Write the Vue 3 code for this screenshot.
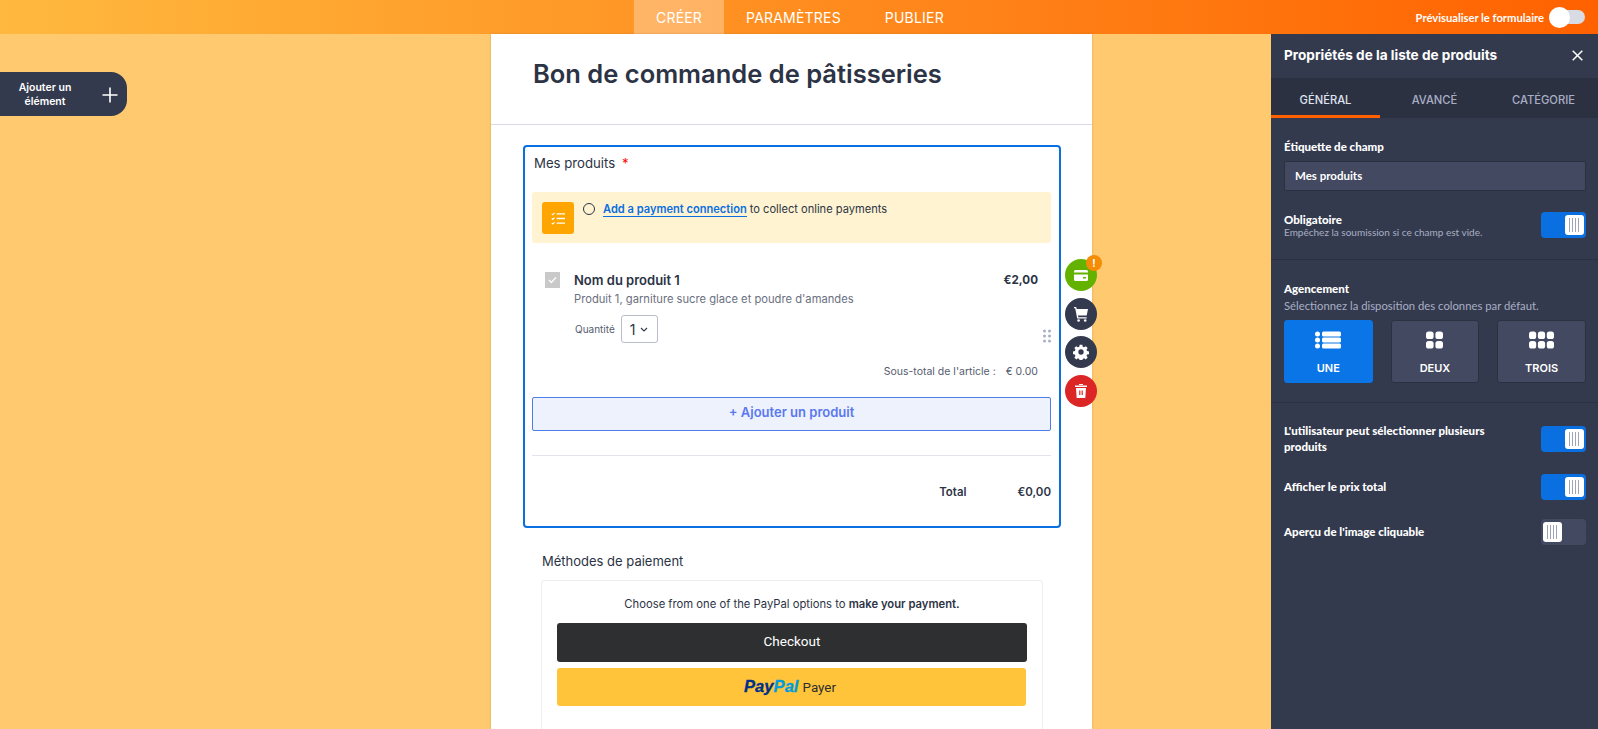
<script setup>
const toggles = [
  { label: "L'utilisateur peut sélectionner plusieurs produits", on: true },
  { label: 'Afficher le prix total', on: true },
  { label: "Aperçu de l'image cliquable", on: false }
]
const layouts = ['UNE', 'DEUX', 'TROIS']
</script>

<template>
  <div class="page">
    <header class="topbar">
      <nav class="nav">
        <a class="nav__item nav__item--active">CRÉER</a>
        <a class="nav__item">PARAMÈTRES</a>
        <a class="nav__item">PUBLIER</a>
      </nav>
      <div class="preview">
        <span>Prévisualiser le formulaire</span>
        <span class="preview__switch"><i></i></span>
      </div>
    </header>

    <div class="main">
      <div class="canvas">
        <button class="add-element">
          <span>Ajouter un élément</span>
          <svg width="16" height="16" viewBox="0 0 16 16"><path d="M8 .5v15M.5 8h15" stroke="#fff" stroke-width="1.6" fill="none"/></svg>
        </button>

        <div class="form">
          <div class="form__head">
            <h1>Bon de commande de pâtisseries</h1>
          </div>

          <div class="form__body">
            <div class="field">
              <div class="field__label">Mes produits <b>*</b></div>

              <div class="notice">
                <span class="notice__icon">
                  <svg width="15" height="13" viewBox="0 0 16 14" fill="none" stroke="#fff">
                    <path d="M6 2h9M6 7h9M6 12h9" stroke-width="1.5"/>
                    <path d="M.8 2l1 1 2-2M.8 7l1 1 2-2M.8 12l1 1 2-2" stroke-width="1.2"/>
                  </svg>
                </span>
                <span class="notice__radio"></span>
                <span class="notice__text"><a>Add a payment connection</a> to collect online payments</span>
              </div>

              <div class="product">
                <span class="product__check">
                  <svg width="9" height="8" viewBox="0 0 9 8"><path d="M1 4l2.4 2.4L8 1.4" stroke="#fff" stroke-width="1.4" fill="none"/></svg>
                </span>
                <div class="product__info">
                  <div class="product__row">
                    <span class="product__name">Nom du produit 1</span>
                    <span class="product__price">€2,00</span>
                  </div>
                  <div class="product__desc">Produit 1, garniture sucre glace et poudre d'amandes</div>
                  <div class="product__qty">
                    <span>Quantité</span>
                    <span class="qty-select">1
                      <svg width="8" height="5" viewBox="0 0 8 5"><path d="M1 1l3 3 3-3" stroke="#343a4e" stroke-width="1.1" fill="none"/></svg>
                    </span>
                  </div>
                  <div class="product__subtotal"><span>Sous-total de l'article :</span><span>€ 0.00</span></div>
                </div>
                <svg class="product__grip" width="8" height="14" viewBox="0 0 8 14" fill="#a9afc2">
                  <circle cx="1.5" cy="2" r="1.5"/><circle cx="6.5" cy="2" r="1.5"/>
                  <circle cx="1.5" cy="7" r="1.5"/><circle cx="6.5" cy="7" r="1.5"/>
                  <circle cx="1.5" cy="12" r="1.5"/><circle cx="6.5" cy="12" r="1.5"/>
                </svg>
              </div>

              <div class="add-product">+ Ajouter un produit</div>
              <div class="field__rule"></div>
              <div class="total"><span>Total</span><b>€0,00</b></div>

              <div class="actions">
                <span class="action action--green">
                  <svg width="14" height="11" viewBox="0 0 14 11"><rect width="14" height="11" rx="1.5" fill="#fff"/><rect y="2.5" width="14" height="2" fill="#64b200"/><rect x="9" y="7" width="3" height="1.5" fill="#64b200"/></svg>
                  <i class="action__badge">!</i>
                </span>
                <span class="action">
                  <svg width="16" height="16" viewBox="0 0 16 16" fill="#fff"><path d="M1 1h2.2l.5 2H15l-1.3 6.6H5l.3 1.6h8.4v1.3H4.2L2.2 2.3H1z"/><circle cx="5.6" cy="14.5" r="1.3"/><circle cx="12.2" cy="14.5" r="1.3"/></svg>
                </span>
                <span class="action">
                  <svg width="16" height="16" viewBox="0 0 24 24" fill="#fff"><path fill-rule="evenodd" d="M10 1h4l.6 3 2 .9 2.6-1.7 2.8 2.8-1.7 2.6.9 2 3 .6v4l-3 .6-.9 2 1.7 2.6-2.8 2.8-2.6-1.7-2 .9-.6 3h-4l-.6-3-2-.9-2.6 1.7-2.8-2.8 1.7-2.6-.9-2-3-.6v-4l3-.6.9-2L2 6l2.8-2.8 2.6 1.7 2-.9zM12 8a4 4 0 1 0 0 8 4 4 0 0 0 0-8z"/></svg>
                </span>
                <span class="action action--red">
                  <svg width="12" height="14" viewBox="0 0 12 14"><path d="M0 1.5h12V3H0zM4 0h4v1H4z" fill="#fff"/><path fill="#fff" fill-rule="evenodd" d="M1 4h10l-.7 10H1.7zM4.2 6.5v4.5h1.2V6.5zM6.6 6.5v4.5h1.2V6.5z"/></svg>
                </span>
              </div>
            </div>

            <div class="payment">
              <div class="payment__label">Méthodes de paiement</div>
              <div class="payment__box">
                <p>Choose from one of the PayPal options to <b>make your payment.</b></p>
                <div class="btn-checkout">Checkout</div>
                <div class="btn-paypal">
                  <span class="paypal-logo"><em>Pay</em><em>Pal</em></span>
                  <span>Payer</span>
                </div>
              </div>
            </div>
          </div>
        </div>
      </div>

      <aside class="panel">
        <div class="panel__head">
          <span>Propriétés de la liste de produits</span>
          <svg width="11" height="11" viewBox="0 0 11 11"><path d="M.7.7l9.6 9.6M10.3.7L.7 10.3" stroke="#fff" stroke-width="1.5"/></svg>
        </div>
        <div class="tabs">
          <span class="tab tab--active">GÉNÉRAL</span>
          <span class="tab">AVANCÉ</span>
          <span class="tab">CATÉGORIE</span>
        </div>

        <section class="section">
          <label class="prop-label">Étiquette de champ</label>
          <div class="input">Mes produits</div>
          <div class="prop-row prop-row--first">
            <div>
              <div class="prop-label prop-label--flat prop-label--nudge">Obligatoire</div>
              <div class="hint">Empêchez la soumission si ce champ est vide.</div>
            </div>
            <span class="switch switch--on"><i></i></span>
          </div>
        </section>

        <section class="section section--layout">
          <div class="prop-label prop-label--flat">Agencement</div>
          <div class="hint hint--big">Sélectionnez la disposition des colonnes par défaut.</div>
          <div class="layouts">
            <div v-for="(name, i) in layouts" :key="name" class="layout" :class="{ 'layout--active': i === 0 }">
              <svg v-if="i === 0" width="26" height="18" viewBox="0 0 26 18" fill="#fff">
                <circle cx="2.5" cy="3" r="2.5"/><circle cx="2.5" cy="9" r="2.5"/><circle cx="2.5" cy="15" r="2.5"/>
                <rect x="7" y="0.5" width="19" height="5" rx="1.5"/><rect x="7" y="6.5" width="19" height="5" rx="1.5"/><rect x="7" y="12.5" width="19" height="5" rx="1.5"/>
              </svg>
              <svg v-else-if="i === 1" width="17" height="17" viewBox="0 0 17 17" fill="#fff">
                <rect width="7.6" height="7.6" rx="2.6"/><rect x="9.4" width="7.6" height="7.6" rx="2.6"/>
                <rect y="9.4" width="7.6" height="7.6" rx="2.6"/><rect x="9.4" y="9.4" width="7.6" height="7.6" rx="2.6"/>
              </svg>
              <svg v-else width="25" height="17" viewBox="0 0 25 17" fill="#fff">
                <rect width="7.2" height="7.6" rx="2.6"/><rect x="8.9" width="7.2" height="7.6" rx="2.6"/><rect x="17.8" width="7.2" height="7.6" rx="2.6"/>
                <rect y="9.4" width="7.2" height="7.6" rx="2.6"/><rect x="8.9" y="9.4" width="7.2" height="7.6" rx="2.6"/><rect x="17.8" y="9.4" width="7.2" height="7.6" rx="2.6"/>
              </svg>
              <span>{{ name }}</span>
            </div>
          </div>
        </section>

        <section class="section section--last">
          <div v-for="t in toggles" :key="t.label" class="prop-row">
            <div class="prop-label prop-label--flat prop-label--wrap">{{ t.label }}</div>
            <span class="switch" :class="{ 'switch--on': t.on }"><i></i></span>
          </div>
        </section>
      </aside>
    </div>
  </div>
</template>

<style>
html, body { margin: 0; padding: 0; }
</style>

<style scoped>
.page {
  height: 729px;
  width: 1598px;
  overflow: hidden;
  display: flex;
  flex-direction: column;
  font-family: Inter, "Noto Sans", sans-serif;
  color: #2c3345;
}

.topbar {
  height: 34px;
  flex: none;
  position: relative;
  display: flex;
  justify-content: flex-end;
  align-items: center;
  background: linear-gradient(90deg, #ffb93e 0%, #ff6100 100%);
}
.nav {
  position: absolute;
  left: 634px;
  top: 0;
  display: flex;
  height: 34px;
}
.nav__item {
  display: flex;
  align-items: center;
  padding: 0 22px;
  color: #fff;
  font-size: 14px;
  letter-spacing: 0.2px;
}
.nav__item--active { background: rgba(255, 255, 255, 0.3); }
.preview {
  display: flex;
  align-items: center;
  gap: 5px;
  padding-right: 13px;
  color: #fff;
  font-family: Lato, sans-serif;
  font-weight: 700;
  font-size: 11.2px;
}
.preview__switch {
  position: relative;
  width: 36px;
  height: 14px;
  border-radius: 7px;
  background: #d8dae4;
}
.preview__switch i {
  position: absolute;
  left: 0;
  top: -3px;
  width: 21px;
  height: 21px;
  border-radius: 50%;
  background: #fff;
}

.main {
  flex: 1;
  display: flex;
  min-height: 0;
}
.canvas {
  flex: 1;
  position: relative;
  background: #ffc970;
  padding-left: 491px;
}
.add-element {
  position: absolute;
  left: 0;
  top: 38px;
  width: 127px;
  height: 44px;
  display: flex;
  align-items: center;
  gap: 25px;
  padding: 0 10px 0 13px;
  border: none;
  border-radius: 0 16px 16px 0;
  background: #343a4e;
  color: #fff;
  font-family: Inter, sans-serif;
  font-weight: 600;
  font-size: 10.5px;
  line-height: 14px;
}
.add-element span { width: 64px; flex: none; text-align: center; padding-top: 2px; }
.add-element svg { flex: none; margin-top: 1px; }

.form {
  width: 601px;
  height: 100%;
  background: #fff;
  box-shadow: 0 0 2px rgba(120, 90, 40, 0.35);
}
.form__head {
  height: 91px;
  box-sizing: border-box;
  border-bottom: 1px solid #d8dae9;
  padding: 24px 42px 0;
}
.form__head h1 {
  margin: 0;
  font-size: 25.5px;
  line-height: 32px;
  font-weight: 600;
  color: #2c3345;
}
.form__body { padding: 20px 31px 0 32px; }

.field {
  position: relative;
  height: 383px;
  box-sizing: border-box;
  border: 2px solid #0a6fe0;
  border-radius: 4px;
  padding: 6px 8px 0 7px;
}
.field__label {
  font-size: 13.2px;
  line-height: 20px;
  padding-left: 2px;
}
.field__label b { color: #f00; font-weight: 400; margin-left: 3px; }

.notice {
  margin-top: 19px;
  height: 51px;
  display: flex;
  align-items: flex-start;
  border-radius: 3px;
  background: #fff3d1;
  font-size: 11.1px;
  line-height: 16px;
}
.notice__icon {
  margin: 10px 0 0 10px;
  width: 32px;
  height: 32px;
  display: flex;
  align-items: center;
  justify-content: center;
  border-radius: 3px;
  background: #ffa500;
}
.notice__radio {
  margin: 11px 0 0 9px;
  width: 10px;
  height: 10px;
  border: 1.5px solid #2c3345;
  border-radius: 50%;
}
.notice__text { margin: 9px 0 0 8px; color: #2c3345; }
.notice__text a {
  color: #0a6fe0;
  font-weight: 600;
  border-bottom: 1px solid #0a6fe0;
}

.product {
  position: relative;
  display: flex;
  margin-top: 28px;
  padding: 0 13px 0 13px;
}
.product__check {
  margin-top: 1px;
  width: 15px;
  height: 16px;
  display: flex;
  align-items: center;
  justify-content: center;
  background: #c9c9c9;
}
.product__info { flex: 1; margin-left: 14px; }
.product__row {
  display: flex;
  justify-content: space-between;
  line-height: 18px;
  font-weight: 600;
}
.product__name { font-size: 13px; }
.product__price { font-size: 11.6px; font-weight: 700; }
.product__desc {
  margin-top: 2px;
  font-size: 11.2px;
  line-height: 16px;
  color: #6b7080;
}
.product__qty {
  display: flex;
  align-items: center;
  margin: 8px 0 0 1px;
  font-size: 10px;
  color: #565c6e;
}
.qty-select {
  margin-left: 6px;
  width: 27px;
  height: 26px;
  padding-left: 8px;
  display: flex;
  align-items: center;
  gap: 5px;
  border: 1px solid #b8bdc9;
  border-radius: 3px;
  color: #2c3345;
  font-size: 14px;
}
.product__subtotal {
  display: flex;
  justify-content: flex-end;
  gap: 10px;
  margin-top: 22px;
  font-size: 10.5px;
  line-height: 14px;
  color: #565c6e;
}
.product__grip {
  position: absolute;
  right: 0;
  top: 58px;
}

.add-product {
  margin-top: 18px;
  height: 32px;
  line-height: 28px;
  text-align: center;
  border: 1px solid #4c7de8;
  border-radius: 2px;
  background: #edf2fd;
  color: #5a78ee;
  font-size: 13px;
  font-weight: 600;
}
.field__rule {
  margin-top: 24px;
  height: 1px;
  background: #e3e5ee;
}
.total {
  display: flex;
  justify-content: flex-end;
  gap: 51px;
  margin-top: 28px;
  font-size: 11.4px;
  font-weight: 600;
  line-height: 16px;
}
.total b { font-size: 11.5px; font-weight: 600; }

.actions {
  position: absolute;
  left: 540px;
  top: 112px;
  display: flex;
  flex-direction: column;
  gap: 6.7px;
}
.action {
  position: relative;
  width: 32px;
  height: 32px;
  display: flex;
  align-items: center;
  justify-content: center;
  border-radius: 50%;
  background: #343a4e;
}
.action--green { background: #64b200; }
.action--red { background: #dc2626; }
.action__badge {
  position: absolute;
  right: -5px;
  top: -4px;
  width: 16px;
  height: 16px;
  border-radius: 50%;
  background: #f48c06;
  color: #fff;
  font-style: normal;
  font-size: 10px;
  font-weight: 700;
  line-height: 16px;
  text-align: center;
}

.payment { padding: 24px 18px 0 18px; }
.payment__label {
  font-size: 13px;
  line-height: 18px;
  padding-left: 1px;
  color: #2c3345;
}
.payment__box {
  margin-top: 10px;
  height: 200px;
  box-sizing: border-box;
  padding: 0 15px;
  border: 1px solid #eceef2;
  border-radius: 3px;
}
.payment__box p {
  margin: 15px 0 0;
  text-align: center;
  font-size: 11.25px;
  line-height: 16px;
}
.payment__box b { font-weight: 600; }
.btn-checkout {
  margin-top: 11px;
  height: 39px;
  line-height: 37px;
  text-align: center;
  border-radius: 3px;
  background: #2e2f31;
  color: #fff;
  font-family: Roboto, sans-serif;
  font-size: 13.5px;
}
.btn-paypal {
  margin: 6px 1px 0 0;
  height: 38px;
  display: flex;
  align-items: center;
  justify-content: center;
  gap: 4px;
  padding-right: 3px;
  border-radius: 3px;
  background: #ffc439;
  font-family: Roboto, sans-serif;
  font-size: 13.4px;
  color: #2c2e2f;
}
.paypal-logo em {
  font-family: "Liberation Sans", sans-serif;
  font-weight: 700;
  font-style: italic;
  font-size: 16.6px;
  color: #003087;
  -webkit-text-stroke: 0.3px currentColor;
}
.paypal-logo em + em { color: #009cde; }

.panel {
  width: 327px;
  flex: none;
  background: #343a4e;
  color: #fff;
  font-family: Lato, sans-serif;
}
.panel__head {
  height: 44px;
  display: flex;
  align-items: center;
  justify-content: space-between;
  padding: 0 15px 2px 13px;
  box-sizing: border-box;
  font-family: Inter, sans-serif;
  font-weight: 700;
  font-size: 13.6px;
}
.tabs {
  display: flex;
  height: 40px;
  background: #2c3142;
}
.tab {
  flex: 1;
  display: flex;
  align-items: center;
  justify-content: center;
  box-sizing: border-box;
  padding-top: 3px;
  font-family: Inter, sans-serif;
  font-size: 11.2px;
  font-weight: 500;
  color: #a8afc4;
}
.tab--active {
  padding-top: 6px;
  color: #dfe3ee;
  border-bottom: 3px solid #ff6100;
}

.section {
  padding: 21px 12px 21px 13px;
  border-bottom: 1px solid #2c3142;
}
.prop-label {
  display: block;
  font-weight: 900;
  font-size: 11.5px;
  line-height: 16px;
  padding-bottom: 6px;
}
.prop-label--flat { padding-bottom: 0; }
.prop-label--nudge { position: relative; top: 1px; }
.prop-label--wrap { width: 215px; line-height: 16px; }
.input {
  height: 28px;
  line-height: 28px;
  padding-left: 10px;
  background: #434961;
  border: 1px solid #2c3142;
  border-radius: 2px;
  font-weight: 700;
  font-size: 11.5px;
}
.hint {
  font-size: 10px;
  line-height: 11px;
  color: #a8afc4;
}
.hint--big { font-size: 11.3px; line-height: 14px; margin-top: 2px; }
.prop-row {
  display: flex;
  justify-content: space-between;
  align-items: center;
  margin-bottom: 19px;
}
.prop-row--first { margin: 20px 0 0; }
.section--layout { padding: 21px 12px 19px 13px; }
.section--last { padding-top: 20px; border-bottom: none; }

.switch {
  flex: none;
  width: 45px;
  height: 26px;
  box-sizing: border-box;
  padding: 3px 3px 3px 2px;
  display: flex;
  justify-content: flex-start;
  border-radius: 4px;
  background: #434961;
}
.switch--on { justify-content: flex-end; background: #0a6fe0; padding-right: 2px; }
.switch i {
  width: 19px;
  height: 20px;
  border-radius: 3px;
  background: repeating-linear-gradient(90deg, #9ea3b5 0 1px, transparent 1px 3px) 4px 3px / 11px 14px no-repeat, #fff;
}

.layouts {
  display: grid;
  grid-template-columns: repeat(3, 1fr);
  column-gap: 18px;
  margin-top: 7px;
}
.layout {
  height: 63px;
  box-sizing: border-box;
  display: flex;
  flex-direction: column;
  align-items: center;
  padding-top: 10px;
  background: #434961;
  border: 1px solid #2c3142;
  border-radius: 3px;
  font-family: Inter, sans-serif;
  font-weight: 600;
  font-size: 11px;
}
.layout svg { height: 18px; }
.layout span { margin-top: 12px; }
.layout--active { background: #0a75e6; border-color: #0a75e6; }
</style>
